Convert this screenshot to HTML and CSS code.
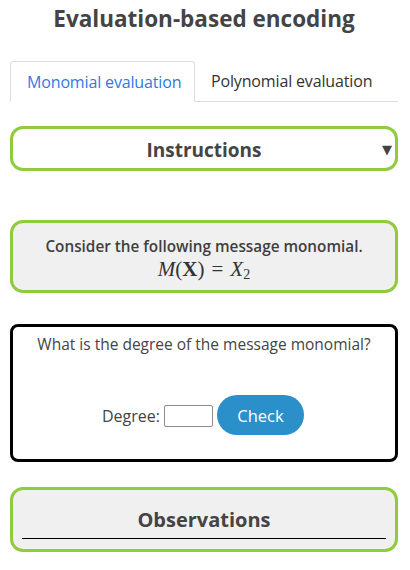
FILE: index.html
```html
<!DOCTYPE html>
<html>
<head>
<meta charset="utf-8">
<link rel="stylesheet" href="styles.css">
</head>
<body>
<div class="page">
  <h1 class="title">Evaluation-based encoding</h1>
  <div class="tabs">
    <div class="tab active">Monomial evaluation</div>
    <div class="tab">Polynomial evaluation</div>
    <div class="tab-fill"></div>
  </div>
  <div class="box instructions">
    <span class="box-heading">Instructions</span>
    <span class="caret">▼</span>
  </div>
  <div class="box grey consider">
    <div class="consider-text">Consider the following message monomial.</div>
    <div class="math"><i>M</i>(<b>X</b>)<span class="eq">=</span><i>X</i><sub>2</sub></div>
  </div>
  <div class="question">
    <div class="q-text">What is the degree of the message monomial?</div>
    <div class="answer-row">
      <label class="label">Degree:</label>
      <input class="degree" type="text">
      <button class="check">Check</button>
    </div>
  </div>
  <div class="box grey observations">
    <div class="obs-heading">Observations</div>
  </div>
</div>
</body>
</html>
```
FILE: styles.css
```css
html, body {
  margin: 0;
  padding: 0;
  background: #fff;
}
body {
  font-family: "Open Sans", "DejaVu Sans", sans-serif;
  color: #3f3f3f;
}
.page {
  width: 388px;
  padding: 0 12px 0 10px;
}
.title {
  margin: 4px 0 0;
  font-size: 22.5px;
  font-weight: 700;
  text-align: center;
  color: #444;
  line-height: 30px;
}
.tabs {
  display: flex;
  margin-top: 27px;
  height: 40px;
}
.tab {
  box-sizing: border-box;
  height: 41px;
  padding: 0 16px;
  display: flex;
  align-items: center;
  font-size: 16px;
  color: #333;
  border-bottom: 1px solid #ddd;
  letter-spacing: -0.15px;
  white-space: nowrap;
}
.tab.active {
  width: 185px;
  border: 1px solid #ddd;
  border-bottom-color: transparent;
  border-radius: 4px 4px 0 0;
  color: #2f7be0;
}
.tab-fill {
  flex: 1;
  height: 41px;
  box-sizing: border-box;
  border-bottom: 1px solid #ddd;
}
.box {
  box-sizing: border-box;
  border: 3px solid #8fcb3b;
  border-radius: 13px;
}
.grey {
  background: #f0f0f0;
}
.instructions {
  margin-top: 25px;
  height: 45px;
  display: flex;
  align-items: center;
  justify-content: center;
  position: relative;
}
.box-heading {
  font-size: 19px;
  font-weight: 700;
  color: #444;
  line-height: 24px;
  margin-top: 2px;
}
.caret {
  position: absolute;
  right: 3px;
  top: 11px;
  font-size: 13px;
  color: #444;
}
.consider {
  margin-top: 49px;
  height: 73px;
  padding-top: 13px;
  text-align: center;
}
.consider-text {
  font-size: 15.3px;
  font-weight: 600;
  color: #3f3f3f;
  line-height: 21px;
}
.math {
  font-family: "Liberation Serif", "DejaVu Serif", serif;
  font-size: 21px;
  line-height: 24px;
  color: #333;
}
.math i {
  font-style: italic;
}
.math b {
  font-weight: 700;
}
.math .eq {
  margin: 0 7px;
}
.math sub {
  font-size: 14px;
  vertical-align: -3px;
  line-height: 0;
}
.question {
  box-sizing: border-box;
  margin-top: 31px;
  height: 138px;
  border: 3px solid #000;
  border-radius: 8px;
  padding-top: 6px;
  text-align: center;
}
.q-text {
  font-size: 15.5px;
  line-height: 22px;
  color: #444;
  white-space: nowrap;
}
.answer-row {
  margin-top: 40px;
  height: 40px;
  display: flex;
  justify-content: center;
  align-items: center;
  gap: 4px;
  padding-right: 2px;
}
.label {
  font-size: 16px;
  color: #444;
  margin-top: 2px;
}
.degree {
  box-sizing: border-box;
  width: 49px;
  height: 22px;
  border: 1px solid #8a8a95;
  border-radius: 2px;
  padding: 0;
  margin: 2px 0 0;
}
.check {
  box-sizing: border-box;
  width: 87px;
  height: 40px;
  border: none;
  border-radius: 20px;
  background: #2b8fca;
  color: #fff;
  font-family: "Open Sans", "DejaVu Sans", sans-serif;
  font-size: 16.5px;
}
.observations {
  margin-top: 25px;
  height: 65px;
  padding: 16px 9px 0;
  text-align: center;
}
.obs-heading {
  font-size: 20px;
  font-weight: 700;
  color: #444;
  border-bottom: 1px solid #000;
  line-height: 28px;
  padding-bottom: 4px;
}
```
